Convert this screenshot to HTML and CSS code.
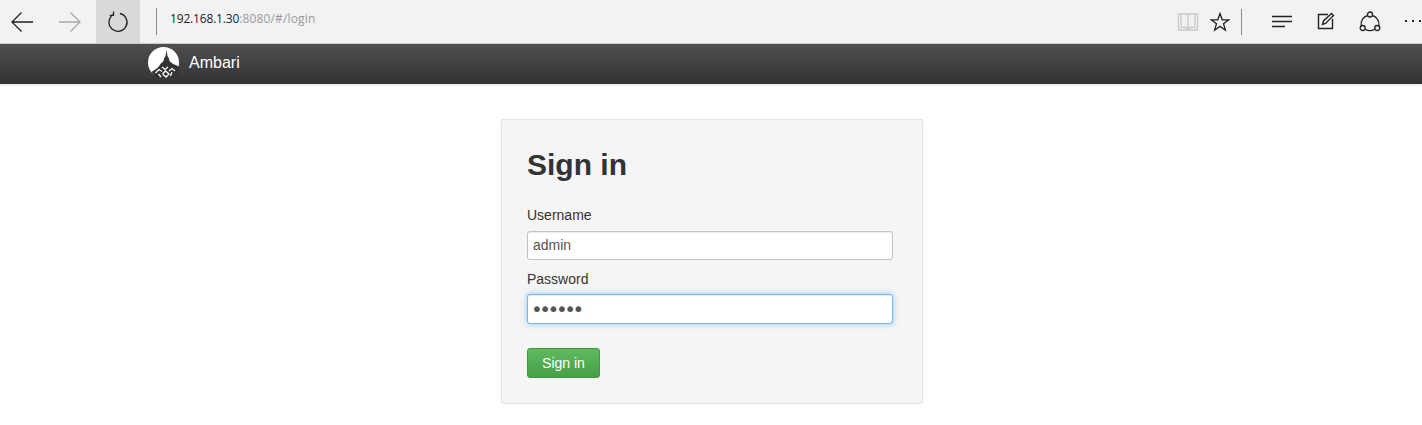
FILE: index.html
```html
<!DOCTYPE html>
<html lang="en">
<head>
<meta charset="utf-8">
<title>Ambari</title>
<link rel="stylesheet" href="styles.css">
</head>
<body>
<header class="browser">
  <div class="nav-buttons">
    <button class="tool" type="button" aria-label="Back">
      <svg width="24" height="24" viewBox="0 0 24 24" fill="none" stroke="#222" stroke-width="1.3"><path d="M2 12H23M11.500 2.500L2 12L11.500 21.500"/></svg>
    </button>
    <button class="tool" type="button" aria-label="Forward">
      <svg width="24" height="24" viewBox="0 0 24 24" fill="none" stroke="#a8a8a8" stroke-width="1.3"><path d="M1 12H22M12.500 2.500L22 12L12.500 21.500"/></svg>
    </button>
    <button class="tool tool-active" type="button" aria-label="Refresh">
      <svg width="22" height="24" viewBox="0 0 22 24" fill="none" stroke="#222" stroke-width="1.3"><path d="M6 4.800A9 9 0 1 0 13 3.500"/><path d="M6.500 1.500L6.500 5.300L2.800 5.300"/></svg>
    </button>
  </div>
  <div class="address">
    <span class="host">192.168.1.30</span><span class="path">:8080/#/login</span>
  </div>
  <div class="right-tools">
    <svg class="ic-book" width="22" height="20" viewBox="0 0 22 20" fill="none" stroke="#c8c8c8" stroke-width="1.3"><path d="M1.500 2H20.500V18H1.500ZM11 2V18M4 2V15.500H9L11 17L13 15.500H18V2"/></svg>
    <svg class="ic-star" width="20" height="20" viewBox="0 0 20 20" fill="none" stroke="#222" stroke-width="1.3"><path d="M10 1.500L12.200 7.800H18.800L13.500 11.800L15.400 18.200L10 14.400L4.600 18.200L6.500 11.800L1.200 7.800H7.800Z"/></svg>
    <span class="sep"></span>
    <svg class="ic-hub" width="21" height="14" viewBox="0 0 21 14" fill="none" stroke="#222" stroke-width="1.3"><path d="M0 1.500H20M0 6.500H20M0 11.500H13"/></svg>
    <svg class="ic-note" width="18" height="18" viewBox="0 0 18 18" fill="none" stroke="#222" stroke-width="1.400"><path d="M11 2.500H1.500V16.500H15.500V7"/><path d="M5.500 12.500L6.500 9L14.500 1.500L16.500 3.500L8.500 11.500Z"/></svg>
    <svg class="ic-share" width="22" height="22" viewBox="0 0 22 22" fill="none" stroke="#222" stroke-width="1.300"><circle cx="11" cy="3.500" r="2.500"/><circle cx="3.700" cy="17" r="2.500"/><circle cx="18.300" cy="17" r="2.500"/><path d="M8.700 4.500A9 9 0 0 0 2.200 14.800M13.300 4.500A9 9 0 0 1 19.800 14.800M6.200 18.200A9 9 0 0 0 15.800 18.200"/></svg>
    <span class="more"><i></i><i></i><i></i></span>
  </div>
</header>

<nav class="navbar">
  <svg class="logo" width="31" height="31" viewBox="0 0 31 31">
    <circle cx="15.500" cy="15.500" r="15.500" fill="#fff"/>
    <path d="M18.500 3L19.500 9L21 11.500L21.500 14C23 16 27 18 31 19.500V24L27 31H8L3.500 25C7 23 11 20 12.500 17L15.500 14L16 11.500L17.500 9Z" fill="#333"/>
    <path d="M7.500 26L11 22.500L14 24.500M14 20L17 22.500L20 20M14.500 27L17.500 24L21 27L18 30L14.500 27M21 24L24 21.500L27 24M24 25L22.500 29M10.500 27L13 30" stroke="#fff" stroke-width="1.300" fill="none"/>
  </svg>
  <span class="brand">Ambari</span>
</nav>

<main class="content">
  <form class="well">
    <h2 class="title">Sign in</h2>
    <label class="field-label" for="user">Username</label>
    <input class="field" id="user" type="text" value="admin">
    <label class="field-label" for="pass">Password</label>
    <input class="field field-focus" id="pass" type="password" value="abcdef">
    <button class="submit" type="button">Sign in</button>
  </form>
</main>
</body>
</html>
```

FILE: styles.css
```css
* { box-sizing: border-box; }
html, body { margin: 0; height: 425px; overflow: hidden; background: #fff; }
body { font-family: "Liberation Sans", Arial, sans-serif; color: #333; font-size: 14px; }

.browser {
  height: 44px;
  display: flex;
  align-items: center;
  background: #f2f2f2;
  border-bottom: 1px solid #cfcfcf;
}
.nav-buttons { display: flex; height: 43px; }
.tool {
  width: 44px;
  height: 43px;
  padding: 0;
  margin: 0 0 0 4px;
  border: 0;
  background: none;
  display: flex;
  align-items: center;
  justify-content: center;
}
.tool:first-child { margin-left: 0; }
.tool-active { background: #d9d9d9; }
.address {
  margin-left: 16px;
  height: 27px;
  border-left: 1px solid #8a8a8a;
  padding: 2px 0 0 13px;
  font-size: 12px;
  line-height: 17px;
  align-self: flex-start;
  margin-top: 8px;
  font-family: "Open Sans", "Liberation Sans", sans-serif;
}
.host { color: #222; letter-spacing: -0.17px; }
.path { color: #9a9a9a; letter-spacing: 0.15px; }
.right-tools {
  margin-left: auto;
  display: flex;
  align-items: center;
  height: 43px;
}
.ic-book { margin-right: 11px; }
.sep { width: 1px; height: 26px; background: #8a8a8a; margin: 0 30px 0 11px; }
.ic-note { margin: 0 0 2px 24px; }
.ic-share { margin-left: 24px; }
.more { display: flex; gap: 5px; margin: 0 0 1px 24px; width: 17px; }
.more i { flex: none; width: 2px; height: 2px; background: #222; }

.navbar {
  height: 40px;
  display: flex;
  align-items: center;
  padding-left: 148px;
  background: linear-gradient(#4f4f4f, #333);
  box-shadow: 0 1px 3px rgba(0,0,0,.12);
}
.logo { display: block; margin-top: -3px; }
.brand { margin-left: 10px; color: #fff; font-size: 16px; margin-top: -3px; }

.content { padding: 35px 0 0 2px; }
.well {
  display: flex;
  flex-direction: column;
  align-items: flex-start;
  width: 422px;
  height: 285px;
  margin: 0 auto;
  padding: 27px 29px 0 25px;
  background: #f5f5f5;
  border: 1px solid #e3e3e3;
  border-radius: 2px;
}
.title {
  margin: 0;
  font-size: 30px;
  font-weight: 700;
  line-height: 36px;
  color: #333;
}
.field-label {
  display: block;
  font-size: 14px;
  line-height: 20px;
  color: #333;
}
.title + .field-label { margin-top: 22px; }
.field {
  display: block;
  width: 366px;
  height: 29px;
  margin: 6px 0 9px;
  padding: 0 5px 1px;
  font: 14px "Liberation Sans", Arial, sans-serif;
  color: #555;
  background: #fff;
  border: 1px solid #c2c2c2;
  border-radius: 3px;
  box-shadow: inset 0 1px 1px rgba(0,0,0,.075);
  outline: none;
}
.field-focus {
  height: 30px;
  margin: 5px 0 0;
  padding: 0 5px 0 3px;
  font-family: "DejaVu Sans", sans-serif;
  font-size: 20px;
  letter-spacing: -3.500px;
  border-color: rgba(82,168,236,.8);
  box-shadow: inset 0 1px 1px rgba(0,0,0,.075), 0 0 6px rgba(82,168,236,.6);
}
.submit {
  width: 73px;
  height: 30px;
  margin-top: 24px;
  padding: 0;
  font: 14px "Liberation Sans", Arial, sans-serif;
  color: #fff;
  background: linear-gradient(#5fba5f, #479f47);
  border: 1px solid #419641;
  border-radius: 3px;
}
```
